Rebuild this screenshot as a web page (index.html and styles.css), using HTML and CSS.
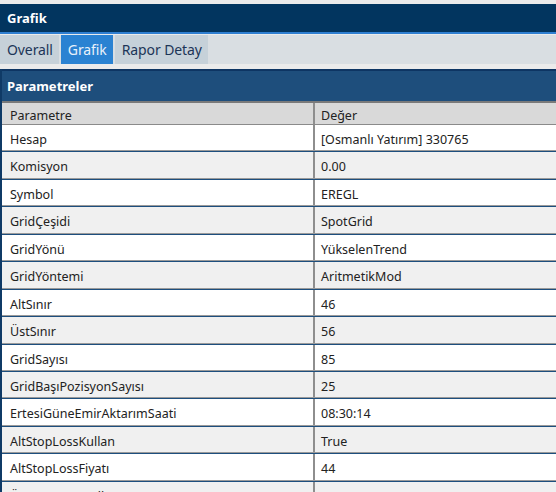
FILE: index.html
```html
<!DOCTYPE html>
<html>
<head>
<meta charset="utf-8">
<link rel="stylesheet" href="styles.css">
</head>
<body>
<div class="page">
  <div class="title-bar">Grafik</div>
  <div class="tabs">
    <div class="tab">Overall</div>
    <div class="tab active">Grafik</div>
    <div class="tab">Rapor Detay</div>
  </div>
  <div class="panel">
    <div class="panel-head">Parametreler</div>
    <div class="grid">
      <div class="row head"><div class="c1">Parametre</div><div class="c2">Değer</div></div>
      <div class="row"><div class="c1">Hesap</div><div class="c2">[Osmanlı Yatırım] 330765</div></div>
      <div class="row alt"><div class="c1">Komisyon</div><div class="c2">0.00</div></div>
      <div class="row"><div class="c1">Symbol</div><div class="c2">EREGL</div></div>
      <div class="row alt"><div class="c1">GridÇeşidi</div><div class="c2">SpotGrid</div></div>
      <div class="row"><div class="c1">GridYönü</div><div class="c2">YükselenTrend</div></div>
      <div class="row alt"><div class="c1">GridYöntemi</div><div class="c2">AritmetikMod</div></div>
      <div class="row"><div class="c1">AltSınır</div><div class="c2">46</div></div>
      <div class="row alt"><div class="c1">ÜstSınır</div><div class="c2">56</div></div>
      <div class="row"><div class="c1">GridSayısı</div><div class="c2">85</div></div>
      <div class="row alt"><div class="c1">GridBaşıPozisyonSayısı</div><div class="c2">25</div></div>
      <div class="row"><div class="c1">ErtesiGüneEmirAktarımSaati</div><div class="c2">08:30:14</div></div>
      <div class="row alt"><div class="c1">AltStopLossKullan</div><div class="c2">True</div></div>
      <div class="row"><div class="c1">AltStopLossFiyatı</div><div class="c2">44</div></div>
      <div class="row alt"><div class="c1">ÜstStopLossKullan</div><div class="c2">True</div></div>
    </div>
  </div>
</div>
</body>
</html>
```

FILE: styles.css
```css
html, body {
  margin: 0;
  padding: 0;
  background: #ebebeb;
  overflow: hidden;
}
body {
  font-family: "Noto Sans", "Open Sans", sans-serif;
  color: #222;
}
.page {
  padding-top: 4px;
}
.title-bar {
  background: #02355f;
  color: #fff;
  font-weight: bold;
  font-size: 13px;
  height: 28px;
  line-height: 29px;
  padding-left: 7px;
  border-bottom: 2px solid #2f7fd1;
}
.tabs {
  display: flex;
  background: #d9dee2;
  height: 29px;
  margin-top: 1px;
}
.tab {
  background: #c6d1d9;
  color: #1c3557;
  font-size: 14px;
  letter-spacing: -0.1px;
  line-height: 29px;
  padding: 0 6px 0 7px;
  margin-right: 2px;
}
.tab.active {
  background: #2a82d2;
  color: #e8f1fb;
}
.panel {
  margin-top: 5px;
  border-left: 2px solid #0f3a66;
}
.panel-head {
  background: #1e4e7c;
  border-top: 2px solid #0e3563;
  color: #fff;
  font-weight: bold;
  font-size: 13px;
  height: 30px;
  line-height: 30px;
  padding-left: 5px;
}
.grid {
  border-top: 2px solid #7a7a7a;
}
.row {
  display: grid;
  grid-template-columns: 313px 1fr;
  height: 25.45px;
  background: #fff;
  border-bottom: 1px solid #9a9a9a;
  box-shadow: 0 1px 0 #1d4f7e;
  margin-bottom: 1px;
  font-size: 12.5px;
  line-height: 29px;
}
.row.alt {
  background: #f0f0f0;
}
.row.head {
  background: #d9d9d9;
  height: 21px;
  line-height: 25px;
  border-bottom: 1px solid #8a8a8a;
  box-shadow: none;
  margin-bottom: 0;
}
.c1 {
  padding-left: 8px;
  border-right: 2px solid #8e8e8e;
  white-space: nowrap;
  overflow: hidden;
}
.c2 {
  padding-left: 6px;
  white-space: nowrap;
  overflow: hidden;
}
```
